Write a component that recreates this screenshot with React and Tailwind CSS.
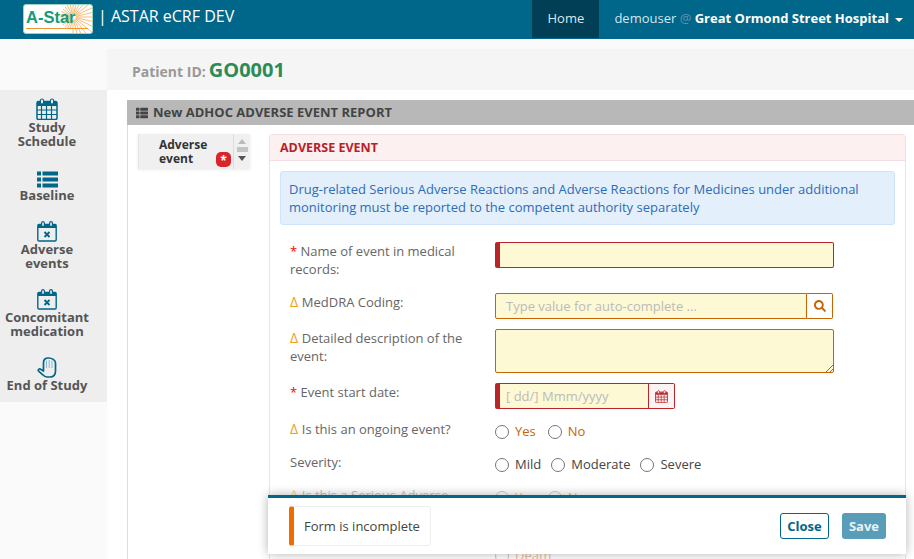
import React from "react";
import { FaSearch, FaThList } from "react-icons/fa";

function GridCalendar({ size = 22, color = "#00668a", className = "" }) {
  return (
    <svg width={size} height={size} viewBox="0 0 22 22" className={className}>
      <path d="M2.5 3.5h17a1.5 1.5 0 0 1 1.5 1.5v15a1.5 1.5 0 0 1-1.5 1.5h-17A1.5 1.5 0 0 1 1 20V5a1.5 1.5 0 0 1 1.5-1.5z" fill="none" stroke={color} strokeWidth="1.5" />
      <rect x="1" y="4" width="20" height="4" fill={color} />
      <path d="M1 12h20M1 16.5h20M5.5 8v13M10.5 8v13M15.5 8v13" stroke={color} strokeWidth="1.2" />
      <rect x="4.5" y="1" width="3" height="5" rx="1.5" fill="white" stroke={color} strokeWidth="1.2" />
      <rect x="14.5" y="1" width="3" height="5" rx="1.5" fill="white" stroke={color} strokeWidth="1.2" />
    </svg>
  );
}

function TimesCalendar() {
  const c = "#00668a";
  return (
    <svg width="20" height="21" viewBox="0 0 20 21">
      <path d="M2 3.5h16a1.2 1.2 0 0 1 1.2 1.2v14.1a1.2 1.2 0 0 1-1.2 1.2H2a1.2 1.2 0 0 1-1.2-1.2V4.700a1.2 1.2 0 0 1 1.200-1.200z" fill="none" stroke={c} strokeWidth="1.4" />
      <rect x="1" y="3.500" width="18" height="3.500" fill={c} />
      <rect x="4.600" y="0.700" width="2.800" height="5" rx="1.400" fill="#eee" stroke={c} strokeWidth="1.200" />
      <rect x="12.600" y="0.700" width="2.800" height="5" rx="1.400" fill="#eee" stroke={c} strokeWidth="1.200" />
      <path d="M7.500 11l5 5M12.500 11l-5 5" stroke={c} strokeWidth="1.800" />
    </svg>
  );
}

function HandIcon() {
  const c = "#00668a";
  return (
    <svg width="20" height="21" viewBox="0 0 20 21">
      <path d="M6.500 13V5.500C6.500 3 8 1 11.500 1S18.500 3 18.500 6v8c0 3.800-2.200 6-5.500 6H10c-1.800 0-3-.8-4.200-2.200L1.600 14.200c-1-1.300.7-3 2.100-2L6.500 14" fill="none" stroke={c} strokeWidth="1.700" strokeLinejoin="round" strokeLinecap="round" />
      <path d="M9.500 3.500V11M12.200 3V11M15 3.500V11" stroke="#8fb9ca" strokeWidth="1" />
    </svg>
  );
}

function ListIcon() {
  return (
    <svg width="21" height="17" viewBox="0 0 21 17">
      <path d="M0 .5h4v4H0zM5.500 .5H21v4H5.500zM0 6.500h4v4H0zM5.500 6.500H21v4H5.500zM0 12.500h4v4H0zM5.500 12.500H21v4H5.500z" fill="#00668a" />
    </svg>
  );
}

function Logo() {
  const rays = [];
  for (let i = 0; i < 28; i++) {
    const a = (i / 28) * Math.PI * 2;
    const r = Math.cos(a) < -0.2 ? 13 : 26;
    rays.push(<line key={i} x1={49 + Math.cos(a) * 3} y1={12 + Math.sin(a) * 3} x2={49 + Math.cos(a) * r} y2={12 + Math.sin(a) * r} stroke="#f7a13d" strokeWidth="0.7" />);
  }
  return (
    <div className="relative w-[70px] h-[30px] mt-1 ml-[23px] bg-white rounded-[3px] border border-[#9cd4c0] overflow-hidden">
      <svg width="68" height="28" viewBox="0 0 68 28" className="absolute left-0 top-0">{rays}<rect x="2" y="23" width="62" height="1" fill="#f0962e" /></svg>
      <span className="absolute left-[2px] top-[2px] text-[16.5px] leading-[20px] font-bold text-[#149b78] font-['Liberation_Sans',sans-serif]">A-Star</span>
    </div>
  );
}

function NavItem({ icon, children }) {
  return (
    <div className="flex flex-col items-center mb-[16px]">
      <div className="h-[24px] flex items-end justify-center">{icon}</div>
      <div className="text-[13px] leading-[14px] font-bold text-[#555] text-center">{children}</div>
    </div>
  );
}

function Delta() {
  return <span className="text-[#f0a020] text-[14px]">Δ </span>;
}
function Star() {
  return <span className="text-[#f00]">* </span>;
}

function Radio({ label, color = "text-[#444]", faded }) {
  return (
    <span className={`flex items-center ${faded ? "opacity-40" : ""}`}>
      <span className="w-[14px] h-[14px] rounded-full border border-[#767676] bg-white mr-[6px] shrink-0" />
      <span className={`text-[13px] ${color}`}>{label}</span>
    </span>
  );
}

export default function App() {
  return (
    <div className="relative w-[914px] h-[559px] overflow-hidden bg-[#fafafa] font-['Open_Sans',sans-serif] text-[13px]">
      <header className="h-[39px] bg-[#00668a] flex">
        <Logo />
        <div className="ml-[5px] text-[16px] leading-[33px] text-white">| ASTAR eCRF DEV</div>
        <div className="ml-auto flex">
          <div className="w-[67px] h-[38px] bg-[#003f56] text-[#dbe9ee] text-[13px] leading-[37px] text-center">Home</div>
          <div className="pl-[15px] pr-[11px] text-[13px] leading-[37px] text-[#d5e5ec] whitespace-nowrap flex items-start">
            <span>demouser <span className="text-[#5c97ad]">@</span> <b className="text-white font-bold">Great Ormond Street Hospital</b></span>
            <span className="ml-[6px] mt-[18px] w-0 h-0 border-x-[4px] border-x-transparent border-t-[4px] border-t-white" />
          </div>
        </div>
      </header>

      <div className="flex mt-[10px]">
        <aside className="w-[107px] shrink-0 pt-[41px]">
          <div className="h-[312px] bg-[#eeeeee] pt-[6px] pr-[13px]">
            <NavItem icon={<GridCalendar />}>Study<br />Schedule</NavItem>
            <NavItem icon={<ListIcon />}>Baseline</NavItem>
            <NavItem icon={<TimesCalendar />}>Adverse<br />events</NavItem>
            <NavItem icon={<TimesCalendar />}>Concomitant<br />medication</NavItem>
            <NavItem icon={<HandIcon />}>End of Study</NavItem>
          </div>
        </aside>

        <main className="flex-1 min-w-0">
          <div className="h-[41px] bg-[#f5f5f5] pl-[25px] pt-[6px] flex items-baseline">
            <span className="text-[14px] font-bold text-[#999]">Patient ID:</span>
            <span className="ml-[3px] text-[20px] font-bold text-[#2e8b57]">GO0001</span>
          </div>
          <div className="h-[469px] bg-white pl-[20px] pt-[10px]">
            <div className="h-full w-[830px] border-l border-[#ddd]">
              <div className="h-[25px] bg-[#b8b8b8] pl-[9px] text-[13px] font-bold text-[#444] leading-[25px] flex items-center whitespace-nowrap -ml-px">
                <FaThList size={12} className="mr-[5px]" />New ADHOC ADVERSE EVENT REPORT
              </div>
              <div className="flex pl-[10px] pt-[9px]">
                <div className="w-[112px] h-[35px] bg-[#f0f0f0] shadow-[0_1px_3px_rgba(0,0,0,0.08)] flex shrink-0 border-l border-[#e4e4e4]">
                  <div className="relative w-[95px] pl-[20px] pt-[4px] text-[12px] leading-[14px] font-bold text-[#333] border-r border-[#ddd]">
                    Adverse<br />event
                    <span className="absolute left-[77px] top-[18px] w-[15px] h-[15px] rounded-[5px] bg-[#d9252a] text-white text-[12px] font-bold leading-[17px] text-center">*</span>
                  </div>
                  <div className="flex-1 flex flex-col items-center pt-[5px]">
                    <span className="w-0 h-0 border-x-[4px] border-x-transparent border-b-[5px] border-b-[#bbb]" />
                    <span className="w-[11px] h-[5px] bg-[#c4c4c4] mt-[3px]" />
                    <span className="w-0 h-0 border-x-[4px] border-x-transparent border-t-[5px] border-t-[#555] mt-[4px]" />
                  </div>
                </div>
                <div className="ml-[19px] w-[637px] h-[430px] border border-[#f3dfe2] rounded-t-[3px]">
                  <div className="h-[26px] bg-[#fdf0f0] border-b border-[#f3dfe2] pl-[10px] text-[12.5px] font-bold leading-[25px] text-[#b8202a]">ADVERSE EVENT</div>
                  <div className="mx-[10px] mt-[10px] h-[54px] bg-[#e3f0fb] border border-[#cfe3fa] rounded-[3px] px-[8px] pt-[8px] text-[13px] leading-[18px] text-[#2f6bb8]">
                    Drug-related Serious Adverse Reactions and Adverse Reactions for Medicines under additional monitoring must be reported to the competent authority separately
                  </div>
                  <div className="pl-[20px] pt-[17px] text-[13px] text-[#666]">
                    <div className="flex h-[51px]">
                      <div className="w-[205px] pr-[30px] leading-[18px]"><Star />Name of event in medical records:</div>
                      <div className="w-[339px] h-[26px] bg-[#fdf9d4] border border-[#b8262a] border-l-[5px] rounded-[2px]" />
                    </div>
                    <div className="flex h-[36px]">
                      <div className="w-[205px] leading-[18px]"><Delta />MedDRA Coding:</div>
                      <div className="w-[338px] h-[26px] flex">
                        <div className="flex-1 bg-[#fdf9d4] border border-[#c96400] rounded-l-[2px] pl-[10px] leading-[25px] text-[#bbb]">Type value for auto-complete ...</div>
                        <div className="w-[26px] border border-l-0 border-[#c96400] rounded-r-[2px] bg-white flex items-center justify-center">
                          <FaSearch size={12} color="#c96400" />
                        </div>
                      </div>
                    </div>
                    <div className="flex h-[54px]">
                      <div className="w-[205px] pr-[20px] leading-[18px]"><Delta />Detailed description of the event:</div>
                      <div className="relative w-[339px] h-[44px] bg-[#fdf9d4] border border-[#c96400] rounded-[2px]">
                        <svg width="8" height="8" viewBox="0 0 8 8" className="absolute right-0 bottom-0"><path d="M1 8l7-7M5 8l3-3" stroke="#555" strokeWidth="0.8" /></svg>
                      </div>
                    </div>
                    <div className="flex h-[38px]">
                      <div className="w-[205px] leading-[18px]"><Star />Event start date:</div>
                      <div className="w-[180px] h-[26px] flex">
                        <div className="w-[154px] bg-[#fdf9d4] border border-[#b8262a] border-l-[5px] rounded-l-[2px] pl-[6px] leading-[25px] text-[#bbb]">[ dd/] Mmm/yyyy</div>
                        <div className="w-[26px] border border-l-0 border-[#b8262a] rounded-r-[2px] bg-[#fdf3f3] flex items-center justify-center">
                          <GridCalendar size={13} color="#b8262a" />
                        </div>
                      </div>
                    </div>
                    <div className="flex h-[33px]">
                      <div className="w-[205px] leading-[18px] -mt-px"><Delta />Is this an ongoing event?</div>
                      <div className="flex gap-[12px] pt-[2px] h-[20px]">
                        <Radio label="Yes" color="text-[#c96400]" />
                        <Radio label="No" color="text-[#c96400]" />
                      </div>
                    </div>
                    <div className="flex h-[33px]">
                      <div className="w-[205px] leading-[18px] -mt-px">Severity:</div>
                      <div className="flex gap-[10px] pt-[2px] h-[20px]">
                        <Radio label="Mild" />
                        <Radio label="Moderate" />
                        <Radio label="Severe" />
                      </div>
                    </div>
                    <div className="flex h-[59px]">
                      <div className="w-[205px] pr-[20px] leading-[18px] opacity-40 -mt-px"><Delta />Is this a Serious Adverse Reaction?</div>
                      <div className="flex gap-[12px] pt-[2px] h-[20px]">
                        <Radio label="Yes" color="text-[#c96400]" faded />
                        <Radio label="No" color="text-[#c96400]" faded />
                      </div>
                    </div>
                    <div className="pl-[205px] h-[18px]">
                      <Radio label="Death" color="text-[#c96400]" faded />
                    </div>
                  </div>
                </div>
              </div>
            </div>
          </div>
        </main>
      </div>

      <div className="absolute left-[268px] top-[495px] w-[638px] h-[59px] bg-white border-t-[3px] border-[#00668a] shadow-[0_0_10px_rgba(0,0,0,0.3)] flex items-center justify-between pl-[21px] pr-[20px]">
        <div className="h-[40px] w-[142px] border border-[#eee] border-l-[5px] border-l-[#ef6c00] rounded-[3px] pl-[10px] leading-[38px] text-[13px] text-[#444]">Form is incomplete</div>
        <div className="flex gap-[13px]">
          <div className="w-[49px] h-[26px] border border-[#00668a] rounded-[3px] text-[13px] font-bold text-[#00668a] leading-[25px] text-center">Close</div>
          <div className="w-[44px] h-[26px] bg-[#5a9db8] rounded-[3px] text-[13px] font-bold text-[#e8f2f6] leading-[26px] text-center">Save</div>
        </div>
      </div>
    </div>
  );
}
